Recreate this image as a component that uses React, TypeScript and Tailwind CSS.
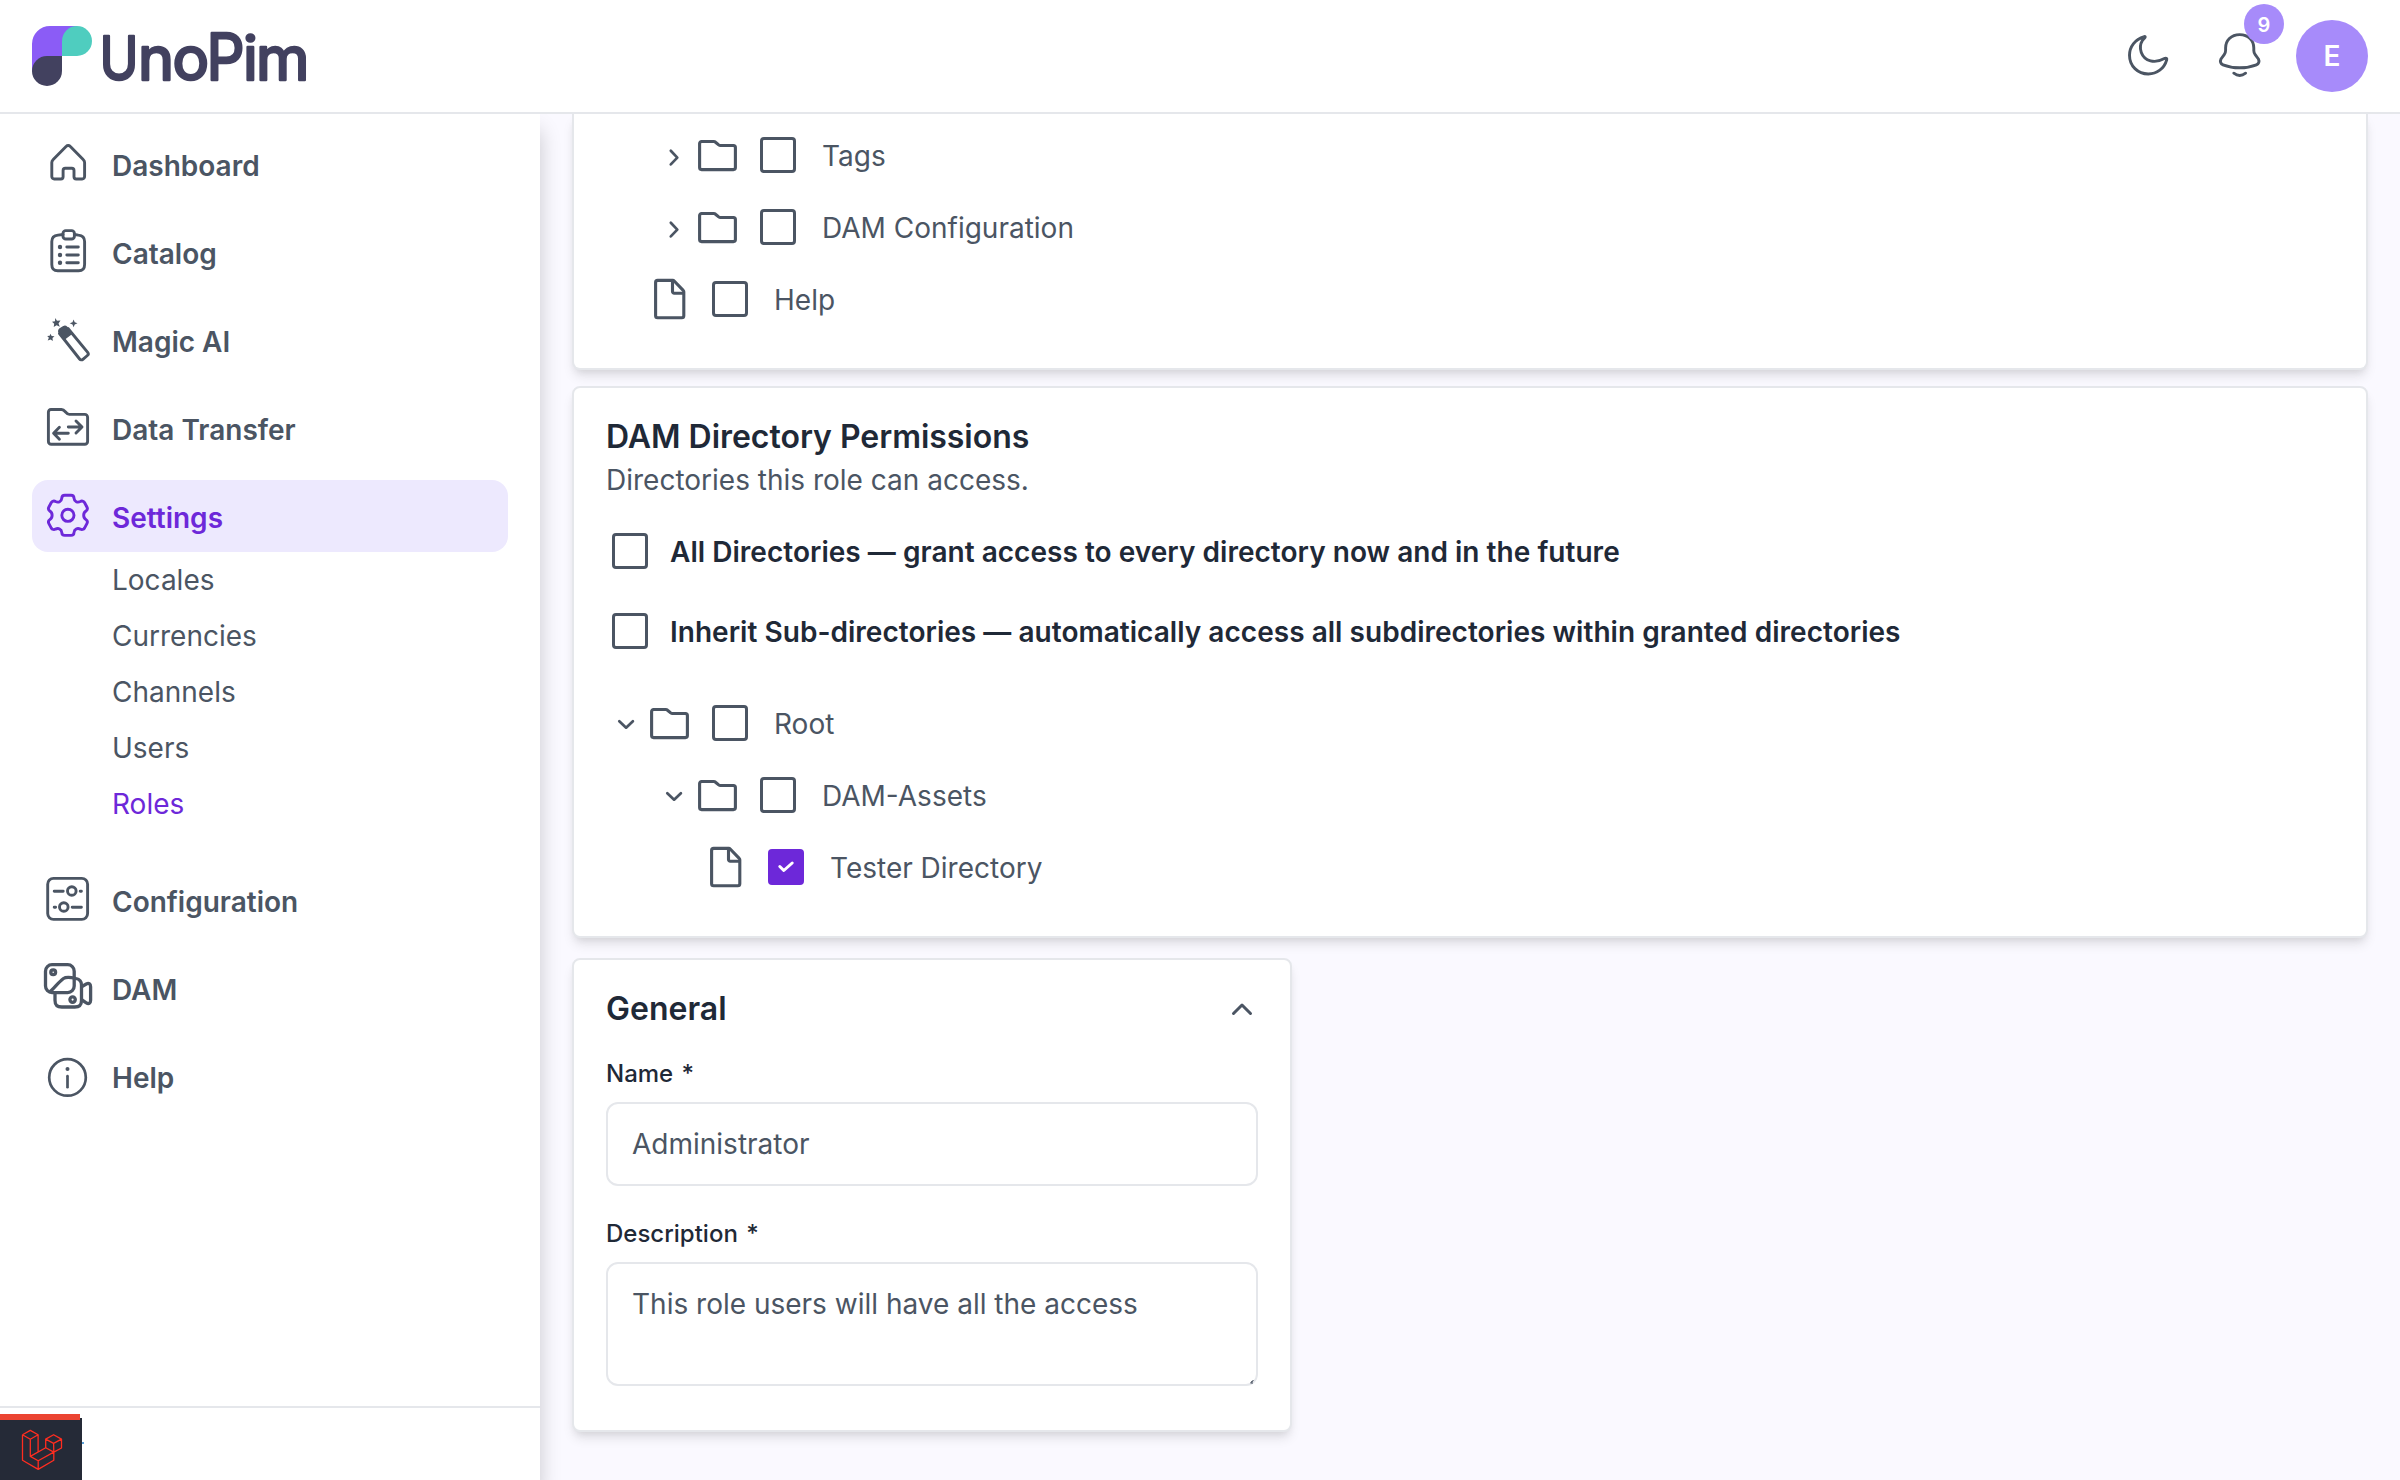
import type { ReactNode } from "react";
import { clsx } from "clsx";

function Icon({ children, className, strokeWidth = 2.9 }: { children: ReactNode; className?: string; strokeWidth?: number }) {
  return (
    <svg
      viewBox="0 0 48 48"
      fill="none"
      stroke="currentColor"
      strokeWidth={strokeWidth}
      strokeLinecap="round"
      strokeLinejoin="round"
      className={clsx("size-12 shrink-0 overflow-visible", className)}
    >
      {children}
    </svg>
  );
}

const HomeIcon = () => (
  <Icon>
    <path d="M9 19.8 22.3 6.3a2.6 2.6 0 0 1 3.8 0L39.4 19.8a3.5 3.5 0 0 1 1.2 2.6v14.2a2.4 2.4 0 0 1-2.4 2.4h-6a2.2 2.2 0 0 1-2.2-2.2v-6.3a2.2 2.2 0 0 0-2.2-2.2h-6.5a2.2 2.2 0 0 0-2.2 2.2v6.3a2.2 2.2 0 0 1-2.2 2.2h-6.7a2.4 2.4 0 0 1-2.4-2.4V22.4a3.5 3.5 0 0 1 1.2-2.6z" />
  </Icon>
);

const CatalogIcon = () => (
  <Icon>
    <path d="M19 6.5l-5 .6c-4 .4-6.2 2.4-6.2 6.4v23c0 4.2 1.8 6.3 6 6.3h20.8c4.2 0 6-2.1 6-6.3v-23c0-4-2.2-6-6.2-6.4l-4-.6" />
    <rect x="19" y="2.6" width="11.4" height="8.4" rx="2.8" />
    <path d="M22.8 19h11.5M22.8 27h11.5M22.8 34.8h11.5" />
    <path d="M16 19h.01M16 27h.01M16 34.8h.01" strokeWidth={4.4} />
  </Icon>
);

const MagicIcon = () => (
  <Icon>
    <path d="M14.8 15.5a3 3 0 0 1 .8-2.3l4-2.6a3 3 0 0 1 3.2.7l5 6.2-7.3 5.5-5-6z" fill="currentColor" strokeWidth={1.5} />
    <path d="M15.5 17.5 35.6 43a2.3 2.3 0 0 0 3.3.3l4.5-3.8a2.3 2.3 0 0 0 .3-3.2L24 12.5" />
    <g fill="currentColor" stroke="none">
      <path d="m11.2 2 1.8 2.8 3.5-.3-2 3 1.3 3.2-3.2-1.5L9.7 11l.5-3.2L8 5.8l3-.6z" />
      <path d="m29.6 3.6 1.1 2.7 2.8 1-2.8 1.2-1.1 2.8-1.1-2.8-2.8-1.2 2.8-1z" />
      <path d="m6.3 17.8 1.4 2.2 2.8.3-2 1.8.3 2.9-2.2-1.6-2.9 1.1 1.2-2.7-1.7-1.7 2.5-.3z" />
    </g>
  </Icon>
);

const TransferIcon = () => (
  <Icon>
    <path d="M7 5.5h10.5c3.8 0 4.3 4.9 7.8 4.9h15.5a2.8 2.8 0 0 1 2.8 2.8v24.3a2.8 2.8 0 0 1-2.8 2.8H7.2a2.8 2.8 0 0 1-2.8-2.8V8.3A2.7 2.7 0 0 1 7 5.5z" />
    <path d="M24.3 29.3H9.8M15.4 23.3l-5.8 6 5.8 6M24.3 23H38M32 17l6 6-6 6" />
  </Icon>
);

const SettingsIcon = () => (
  <Icon>
    <path d="M20.8 3.2H27a3 3 0 0 1 3 2.9C30.3 9.6 33.5 11 36.3 9.5a3.1 3.1 0 0 1 4.2 1L42.9 15a3.1 3.1 0 0 1-.9 4C38.9 21 38.9 25.6 42 27.6a3.1 3.1 0 0 1 .9 4L40.5 36.1a3.1 3.1 0 0 1-4.2 1C33.5 35.6 30.3 37 30 40.5a3 3 0 0 1-3 2.9H20.8a3 3 0 0 1-3-2.9C17.5 37 14.3 35.6 11.5 37.1a3.1 3.1 0 0 1-4.2-1L4.9 31.6a3.1 3.1 0 0 1 .9-4C8.9 25.6 8.9 21 5.8 19a3.1 3.1 0 0 1-.9-4L7.3 10.5a3.1 3.1 0 0 1 4.2-1C14.3 11 17.5 9.6 17.8 6.1a3 3 0 0 1 3-2.9z" />
    <circle cx="23.9" cy="23.3" r="6.1" />
  </Icon>
);

const ConfigurationIcon = () => (
  <Icon>
    <rect x="3.7" y="2.4" width="39.9" height="41" rx="5.8" />
    <path d="M10.2 15.3h9M36.2 15.3h1.2M10.2 31.3h1.4M28.2 31.3h9.2" />
    <circle cx="27.8" cy="15" r="4.3" />
    <circle cx="19.8" cy="31" r="4.3" />
  </Icon>
);

const DamIcon = () => (
  <Icon strokeWidth={3.3}>
    <rect x="1.5" y=".7" width="28.7" height="27.9" rx="6.5" />
    <path d="M11 29.5v6.7c0 5 2 6.8 6.8 6.8h13c4.800 0 6.700-2 6.700-6.800V21c0-4-1.500-5.700-5.500-6.500-4-1-9.500-2.200-12.500 0C14.500 18 10 24.500 6 27.500" />
    <path d="M38 22.5l4.3-2.5c2.4-1.2 4.3-.3 4.3 2.8v13.5c0 3.1-1.9 4-4.3 2.5L38 36" />
    <circle cx="9.2" cy="8.3" r="2.4" />
    <circle cx="28.6" cy="35.6" r="2.7" />
  </Icon>
);

const InfoIcon = () => (
  <Icon strokeWidth={2.7}>
    <circle cx="23.5" cy="25.4" r="18.3" />
    <path d="M23.5 24.2v11" />
    <path d="M23.5 17h.01" strokeWidth={4} />
  </Icon>
);

const FolderIcon = () => (
  <Icon strokeWidth={3.1} className="text-[#4b5563]">
    <path d="M7.6 10.5h12.1c.7 0 1.3.2 1.8.7l3.2 2.7c.5.4 1 .6 1.7.6h13a2 2 0 0 1 2 2v20.1a2 2 0 0 1-2 2H7.6a2 2 0 0 1-2-2V12.5a2 2 0 0 1 2-2z" />
  </Icon>
);

const FileIcon = () => (
  <Icon strokeWidth={3.1} className="text-[#4b5563]">
    <path d="M11.6 5.4h15.2a2 2 0 0 1 1.4.6l9 9.3a2 2 0 0 1 .6 1.4v24a2 2 0 0 1-2 2H11.6a2 2 0 0 1-2-2V7.4a2 2 0 0 1 2-2z" />
    <path d="M26.5 6v10.5a1.7 1.7 0 0 0 1.7 1.7h9" />
  </Icon>
);

function Chevron({ dir }: { dir: "down" | "right" }) {
  return (
    <svg viewBox="0 0 40 48" fill="none" stroke="#4b5563" strokeWidth={2.7} strokeLinecap="round" strokeLinejoin="round" className="h-12 w-10 shrink-0">
      <path d={dir === "down" ? "m13.3 22.2 6.8 6.5 6.8-6.5" : "m16.8 19.8 6.5 6.8-6.5 6.8"} />
    </svg>
  );
}

function Checkbox({ checked }: { checked?: boolean }) {
  return (
    <span
      className={clsx(
        "flex size-9 shrink-0 rounded-[4px]",
        checked ? "bg-[#6d28d9]" : "border-[3px] border-[#4b5563] bg-white"
      )}
    >
      {checked && (
        <svg viewBox="0 0 36 36" fill="none" stroke="#fff" strokeWidth={3} strokeLinecap="round" strokeLinejoin="round" className="size-9">
          <path d="m11.8 17.5 4 4 8.4-7.5" />
        </svg>
      )}
    </span>
  );
}

const MENU_TOP = [
  { label: "Dashboard", icon: <HomeIcon /> },
  { label: "Catalog", icon: <CatalogIcon /> },
  { label: "Magic AI", icon: <MagicIcon /> },
  { label: "Data Transfer", icon: <TransferIcon /> },
  { label: "Settings", icon: <SettingsIcon />, active: true },
];

const SETTINGS_ITEMS = ["Locales", "Currencies", "Channels", "Users", "Roles"];

const MENU_BOTTOM = [
  { label: "Configuration", icon: <ConfigurationIcon /> },
  { label: "DAM", icon: <DamIcon /> },
  { label: "Help", icon: <InfoIcon /> },
];

function MenuItem({ label, icon, active }: { label: string; icon: ReactNode; active?: boolean }) {
  return (
    <a
      className={clsx(
        "flex h-[72px] items-center gap-5 rounded-2xl px-3",
        active ? "bg-[#ede9fe] text-[#6d28d9]" : "text-[#4b5563]"
      )}
    >
      {icon}
      <span className="pt-1 font-semibold">{label}</span>
    </a>
  );
}

type TreeRowProps = { label: string; kind: "folder" | "file"; indent: string; open?: boolean; checked?: boolean };

function TreeRow({ label, kind, indent, open, checked }: TreeRowProps) {
  return (
    <div className={clsx("flex h-[72px] items-center", indent)}>
      {kind === "folder" && <Chevron dir={open ? "down" : "right"} />}
      {kind === "folder" ? <FolderIcon /> : <FileIcon />}
      <span className="ml-[18px] mr-[26px]">
        <Checkbox checked={checked} />
      </span>
      <span className="pt-0.5 text-[#4b5563]">{label}</span>
    </div>
  );
}

function Logo() {
  return (
    <svg viewBox="0 0 280 60" className="h-[60px] w-[280px] overflow-visible">
      <path d="M0 18A18 18 0 0 1 18 0h27v15H30v15H15v15H0z" fill="#8b5cf6" />
      <path d="M30 15a15 15 0 0 1 30 0 15 15 0 0 1-15 15H30z" fill="#4fcdbf" />
      <path d="M15 30h15v15a15 15 0 0 1-30 0 15 15 0 0 1 15-15z" fill="#42415f" />
      <text
        y="54"
        fill="#42415f"
        stroke="#42415f"
        strokeWidth="2.6"
        strokeLinejoin="round"
        className="font-['Inter'] text-[61px] font-normal"
      >
        <tspan x="67.5" textLength="39" lengthAdjust="spacingAndGlyphs">U</tspan>
        <tspan x="106">n</tspan>
        <tspan x="140.5">o</tspan>
        <tspan x="174.5" textLength="38" lengthAdjust="spacingAndGlyphs" fontSize="64">P</tspan>
        <tspan x="211">i</tspan>
        <tspan x="224">m</tspan>
      </text>
    </svg>
  );
}

function Header() {
  return (
    <header className="relative z-20 flex h-[114px] items-start justify-between border-b-2 border-[#e5e7eb] bg-white px-8">
      <div className="pt-[26px]">
        <Logo />
      </div>
      <div className="flex items-start pt-5 text-[#4b5563]">
        <Icon className="mt-3">
          <path d="M20.3 4.6C10.8 7.4 5.5 14.8 5.5 23.2 5.5 34 13.8 42 24.3 42c8.5 0 16-5.5 18.4-14.2.4-1.4-.4-2-1.7-1.5-4.2 2.3-9.5 3.9-14.5 2.5-9.3-2.5-12.6-13-8-20.5l2.5-2.8c.5-.6.1-1.1-.7-.9z" />
        </Icon>
        <div className="relative ml-11 mr-8 mt-3">
          <Icon>
            <path d="M23.7 2.6C15 2.6 9.6 8.8 9.6 16v2.5c0 1.5-.4 2.7-1.4 4.1L5 27c-1.2 2.5-.4 4.8 2 5.8 10 4 23.4 4 33.4 0 2.4-1 3.2-3.3 2-5.8l-3.2-4.4c-1-1.4-1.4-2.6-1.4-4.1V16c0-7.2-5.4-13.4-14.1-13.4z" />
            <path d="M17.8 41.2c3.6 2.7 8.2 2.7 11.8 0" />
          </Icon>
          <span className="absolute -top-7 left-7 flex size-10 items-center justify-center rounded-full bg-[#a78bfa] pt-0.5 text-[20px] font-semibold text-white">
            9
          </span>
        </div>
        <button className="flex size-[72px] items-center justify-center rounded-full bg-[#a78bfa] font-semibold text-white">
          E
        </button>
      </div>
    </header>
  );
}

function Sidebar() {
  return (
    <aside className="relative z-10 flex w-[540px] shrink-0 flex-col justify-between bg-white shadow-[0px_16px_20px_0px_rgba(0,0,0,0.2)]">
      <nav className="flex flex-col gap-4 px-8 pt-3.5">
        {MENU_TOP.map((item) => (
          <MenuItem key={item.label} {...item} />
        ))}
        <div className="-mt-4 flex flex-col pb-4 pl-20">
          {SETTINGS_ITEMS.map((item) => (
            <a key={item} className={clsx("flex h-14 items-center", item === "Roles" ? "text-[#6d28d9]" : "text-[#4b5563]")}>
              {item}
            </a>
          ))}
        </div>
        {MENU_BOTTOM.map((item) => (
          <MenuItem key={item.label} {...item} />
        ))}
      </nav>

      <div className="relative h-[74px] border-t-2 border-[#e5e7eb]">
        {/* Debugbar handle */}
        <div className="absolute bottom-0 left-0 h-[62px] w-[82px] bg-[#252a37]">
          <div className="absolute -top-1 left-0 h-1.5 w-20 bg-[#eb4432]" />
          <svg viewBox="0 0 40 40" fill="none" stroke="#ff2d20" strokeWidth={1.3} strokeLinejoin="round" className="ml-[22px] mt-3 size-10 overflow-visible">
            <path d="M.5 4.8 8.3.4l7.8 4.4v17.3M.5 4.8v25.500l15.700 9.100 15.600-9.100v-8.200l-8.100-4.400V9.100l7.900-4.400 7.900 4.400v8.900l-7.700 4.100-15.600 8.600v8.700M.5 4.800l7.800 4.400 7.800-4.400M8.300 9.200v17.200l7.900 4.300M8.300 26.400l15.400-8.700M23.700 9.100l7.900 4.300 7.900-4.300M31.600 13.400l.2 8.700" />
          </svg>
          <div className="absolute left-[82px] top-6 h-0.5 w-0.5 bg-[#5aa0d8]" />
        </div>
      </div>
    </aside>
  );
}

function Card({ children, className }: { children: ReactNode; className?: string }) {
  return (
    <section
      className={clsx(
        "border-2 border-[#e5e7eb] bg-white px-8 shadow-[0_8px_12px_-2px_rgba(0,0,0,0.1),0_4px_8px_-4px_rgba(0,0,0,0.1)]",
        className
      )}
    >
      {children}
    </section>
  );
}

function FieldLabel({ children }: { children: ReactNode }) {
  return (
    <label className="mb-2.5 block text-[24px] font-medium leading-9 text-[#1f2937]">
      {children} <span className="ml-0.5">*</span>
    </label>
  );
}

export default function App() {
  return (
    <div className="flex h-[1480px] w-[2400px] flex-col overflow-hidden bg-[#faf9ff] font-['Inter',sans-serif] text-[28px] leading-[42px]">
      <Header />
      <div className="flex min-h-0 flex-1">
        <Sidebar />
        <main className="flex-1 px-8">
          <Card className="h-64 rounded-b-lg border-t-0 pt-[5px]">
            <TreeRow label="Tags" kind="folder" indent="pl-12" />
            <TreeRow label="DAM Configuration" kind="folder" indent="pl-12" />
            <TreeRow label="Help" kind="file" indent="pl-10" />
          </Card>

          <Card className="mt-4 h-[552px] rounded-lg pt-[33px]">
            <h2 className="text-[32px] font-semibold leading-8 tracking-[-0.03px] text-[#1f2937]">DAM Directory Permissions</h2>
            <p className="mb-[11px] mt-[7px] leading-10 text-[#4b5563]">Directories this role can access.</p>
            <label className="flex h-20 items-center gap-[22px] pl-1.5 font-semibold tracking-[0.03px] text-[#1f2937]">
              <Checkbox />
              <span className="pt-0.5">All Directories — grant access to every directory now and in the future</span>
            </label>
            <label className="flex h-20 items-center gap-[22px] pl-1.5 font-semibold tracking-[0.03px] text-[#1f2937]">
              <Checkbox />
              <span className="pt-0.5">Inherit Sub-directories — automatically access all subdirectories within granted directories</span>
            </label>
            <div className="mt-4">
              <TreeRow label="Root" kind="folder" indent="pl-0" open />
              <TreeRow label="DAM-Assets" kind="folder" indent="pl-12" open />
              <TreeRow label="Tester Directory" kind="file" indent="pl-24" checked />
            </div>
          </Card>

          <Card className="mt-5 h-[474px] w-[720px] rounded-lg">
            <div className="flex h-24 items-center justify-between">
              <h2 className="pt-0.5 text-[32px] font-semibold text-[#1f2937]">General</h2>
              <svg viewBox="0 0 32 32" fill="none" stroke="#4b5563" strokeWidth={3} strokeLinecap="round" strokeLinejoin="round" className="size-8">
                <path d="m7.5 21.5 8.5-8.5 8.5 8.5" />
              </svg>
            </div>
            <FieldLabel>Name</FieldLabel>
            <input
              defaultValue="Administrator"
              className="mb-[30px] block h-[84px] w-full rounded-xl border-2 border-[#e5e7eb] px-6 text-[#4b5563] outline-none"
            />
            <FieldLabel>Description</FieldLabel>
            <div className="relative">
              <textarea
                defaultValue="This role users will have all the access"
                className="block h-[124px] w-full resize-none overflow-hidden rounded-xl border-2 border-[#e5e7eb] px-6 py-[19px] text-[#4b5563] outline-none"
              />
              <svg viewBox="0 0 4 4" className="absolute bottom-0.5 right-1 size-1">
                <path d="M0 3.5 3.5 0M2 4V1" stroke="#374151" strokeWidth={1} />
              </svg>
            </div>
          </Card>
        </main>
      </div>
    </div>
  );
}
